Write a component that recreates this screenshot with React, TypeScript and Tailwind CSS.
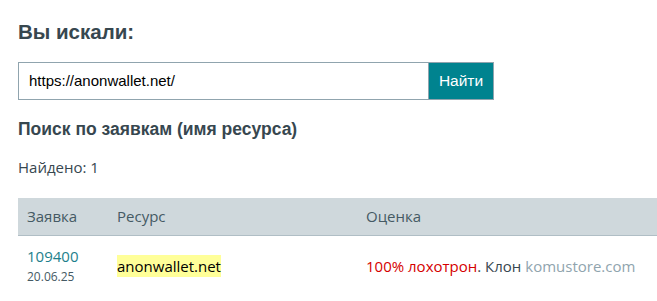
import React from "react";

export default function App() {
  return (
    <div className="w-[657px] h-[301px] overflow-hidden bg-white pl-[18px] pt-[20px]">
      <h1 className="text-[20.5px] font-bold leading-[24px] text-[#37474f] font-['Liberation_Sans',Arial,sans-serif]">
        Вы искали:
      </h1>
      <div className="mt-[18px] flex h-[38px] w-[476px]">
        <div className="flex-1 border border-[#90a4ae] flex items-center px-[10px] text-[15px] text-black font-['Liberation_Sans',Arial,sans-serif]">
          https://anonwallet.net/
        </div>
        <div className="w-[65px] bg-[#00838f] border border-l-0 border-[#90a4ae] flex items-center justify-center text-white text-[15.5px] font-['Liberation_Sans',Arial,sans-serif]">
          Найти
        </div>
      </div>
      <h2 className="mt-[19px] text-[17.5px] font-bold leading-[20px] text-[#37474f] font-['Liberation_Sans',Arial,sans-serif]">
        Поиск по заявкам (имя ресурса)
      </h2>
      <div className="mt-[18px] text-[15px] leading-[20px] text-[#37474f] font-['Open_Sans','Noto_Sans',sans-serif]">
        Найдено: 1
      </div>
      <div className="mt-[21px] font-['Open_Sans','Noto_Sans',sans-serif] text-[15px]">
        <div className="flex h-[38px] items-center bg-[#cfd8dc] border-b border-[#b0bec5] text-[#455a64]">
          <div className="w-[99px] pl-[9px]">Заявка</div>
          <div className="w-[249px]">Ресурс</div>
          <div>Оценка</div>
        </div>
        <div className="flex items-center h-[60px]">
          <div className="w-[99px] pl-[9px] flex flex-col">
            <span className="text-[#1e7f8c] leading-[22px]">109400</span>
            <span className="text-[12px] text-[#455a64] leading-[20px]">20.06.25</span>
          </div>
          <div className="w-[249px]">
            <span className="bg-[#ffff99] text-black py-[1px]">anonwallet.net</span>
          </div>
          <div className="text-[#37474f]">
            <span className="text-[#d50000]">100% лохотрон</span>. Клон{" "}
            <span className="text-[#90a4ae]">komustore.com</span>
          </div>
        </div>
      </div>
    </div>
  );
}
